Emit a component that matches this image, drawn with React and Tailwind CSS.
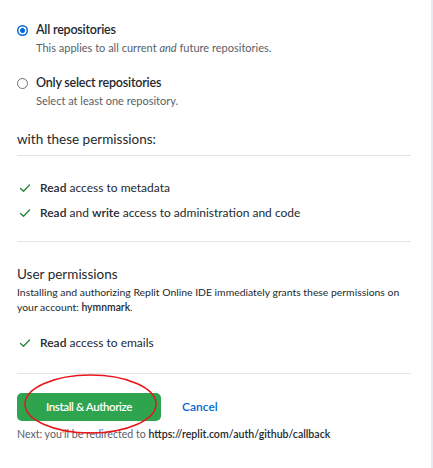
import React from 'react'

const Check = () => (
  <svg width="12" height="12" viewBox="0 0 12 12" className="shrink-0">
    <path d="M1.5 6.5 4.5 9.3 10.5 3" fill="none" stroke="#22863a" strokeWidth="1.3" strokeLinecap="round" strokeLinejoin="round" />
  </svg>
)

const Radio = ({ checked }) =>
  checked ? (
    <span className="w-[11px] h-[11px] rounded-full bg-[#0366d6] flex items-center justify-center shrink-0">
      <span className="w-[5px] h-[5px] rounded-full bg-[#0366d6] ring-[1.5px] ring-white" />
    </span>
  ) : (
    <span className="w-[11px] h-[11px] rounded-full border border-[#6a737d] bg-white shrink-0" />
  )

const RepoOption = ({ checked, title, children }) => (
  <div className="flex flex-col">
    <div className="flex items-center gap-[8px]">
      <Radio checked={checked} />
      <span className="text-[12.5px] tracking-[-0.2px] font-semibold text-[#24292e] leading-[18px]">{title}</span>
    </div>
    <p className="pl-[19px] text-[11px] text-[#586069] leading-[16px] mt-[1px]">{children}</p>
  </div>
)

const Perm = ({ children }) => (
  <li className="flex items-center gap-[9px] pl-[2px] text-[12px] text-[#24292e] leading-[16px]">
    <Check />
    <span>{children}</span>
  </li>
)

export default function App() {
  return (
    <div
      className="w-[433px] h-[468px] bg-white border-r-2 border-[#e6ebf1] relative overflow-hidden"
      style={{ fontFamily: 'Lato, "Open Sans", sans-serif' }}
    >
      <div className="pl-[17px] w-[411px] pt-[21px]">
        <RepoOption checked title="All repositories">
          This applies to all current <em>and</em> future repositories.
        </RepoOption>
        <div className="mt-[18px]">
          <RepoOption title="Only select repositories">Select at least one repository.</RepoOption>
        </div>

        <h3 className="mt-[20px] text-[13.5px] text-[#24292e] leading-[20px] pb-[6px] border-b border-[#e1e4e8]">
          with these permissions:
        </h3>
        <ul className="mt-[24px] flex flex-col gap-[9px]">
          <Perm><b className="font-semibold">Read</b> access to metadata</Perm>
          <Perm><b className="font-semibold">Read</b> and <b className="font-semibold">write</b> access to administration and code</Perm>
        </ul>

        <div className="mt-[20px] border-t border-[#e1e4e8]" />

        <h3 className="mt-[22px] text-[13.5px] text-[#24292e] leading-[20px]">User permissions</h3>
        <p className="w-[400px] text-[10.4px] text-[#24292e] leading-[15px] mt-[1px]">
          Installing and authorizing Replit Online IDE immediately grants these permissions on your account: <b className="font-semibold">hymnmark</b>.
        </p>
        <ul className="mt-[20px] flex flex-col">
          <Perm><b className="font-semibold">Read</b> access to emails</Perm>
        </ul>

        <div className="mt-[22px] border-t border-[#e1e4e8]" />

        <div className="mt-[19px] flex items-center">
          <button className="w-[144px] h-[28px] rounded-[5px] bg-[#2ea44f] text-white text-[11.5px] tracking-[-0.4px] font-semibold">
            Install &amp; Authorize
          </button>
          <a className="ml-[21px] text-[12px] font-semibold text-[#0366d6]">Cancel</a>
        </div>
        <p className="mt-[5px] text-[10.6px] text-[#586069] leading-[16px]">
          Next: you'll be redirected to <b className="font-semibold text-[#24292e]">https://replit.com/auth/github/callback</b>
        </p>
      </div>

      <svg className="absolute left-0 top-0 pointer-events-none" width="433" height="468">
        <ellipse cx="90.5" cy="404" rx="65.5" ry="29" fill="none" stroke="#e8151b" strokeWidth="1.5" />
      </svg>
    </div>
  )
}
